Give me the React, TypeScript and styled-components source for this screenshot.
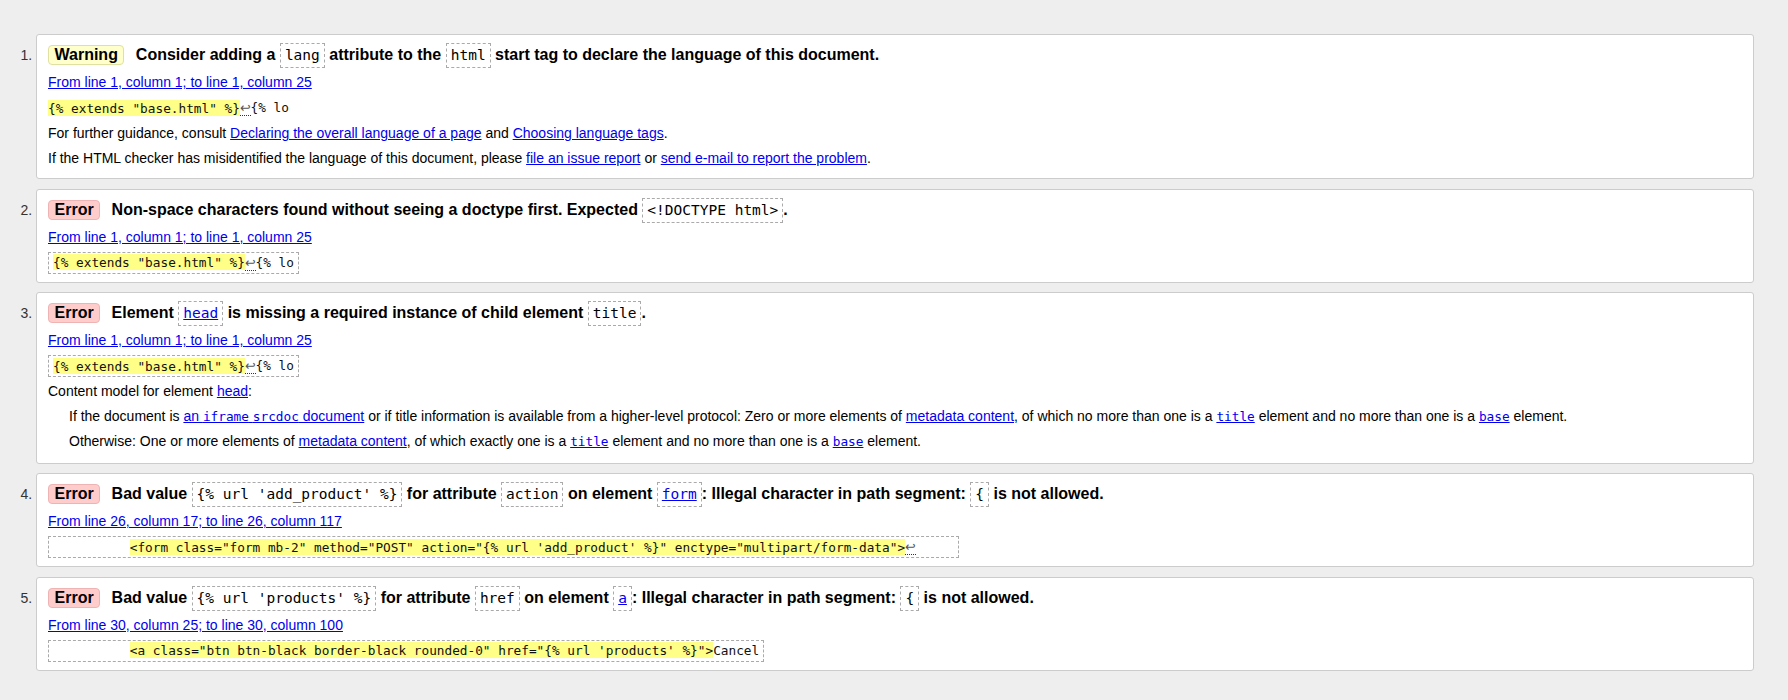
import React from 'react';
import styled, { createGlobalStyle } from 'styled-components';

const GlobalStyle = createGlobalStyle`
  html, body {
    margin: 0;
    padding: 0;
    background: #eee;
  }
  body {
    font-family: "Liberation Sans", Arial, sans-serif;
    font-size: 14px;
    color: #000;
  }
`;

const MessageList = styled.ol`
  margin: 0;
  padding: 34px 34px 24px 36px;
  list-style: decimal outside;
`;

const Message = styled.li`
  margin: 0 0 9.5px;
  padding: 8px 8px 8px 11px;
  background: #fff;
  border: 1px solid #ccc;
  border-radius: 3px;

  &::marker {
    color: #333;
    font-size: 14px;
  }
`;

const Title = styled.p`
  margin: 0;
  font-size: 16px;
  font-weight: bold;
  line-height: 24px;
`;

const Badge = styled.strong<{ $kind: 'warning' | 'error' }>`
  display: inline-block;
  margin-right: 7px;
  padding: 0 5.5px;
  line-height: 18px;
  border: 1px solid ${({ $kind }) => ($kind === 'error' ? '#eeb4b4' : '#e0e0a0')};
  border-radius: 4px;
  background: ${({ $kind }) => ($kind === 'error' ? '#fcc' : '#ffc')};
`;

const TitleCode = styled.code`
  display: inline-block;
  padding: 3px 4px;
  font-family: "DejaVu Sans Mono", "Liberation Mono", monospace;
  font-size: 14.5px;
  font-weight: normal;
  line-height: 17px;
  border: 1px dashed #aaa;
`;

const Link = styled.a`
  color: #00e;
  text-decoration: underline;
  cursor: pointer;
`;

const Location = styled.p`
  margin: 2px 0 0;
  line-height: 24px;
`;

const Extract = styled.p<{ $boxed?: boolean }>`
  width: fit-content;
  margin: 3px 0 0;
  padding: ${({ $boxed }) => ($boxed ? '2px 4px' : '3px 0')};
  font-family: "DejaVu Sans Mono", "Liberation Mono", monospace;
  font-size: 12.75px;
  line-height: 16px;
  white-space: pre;
  color: #111;
  border: ${({ $boxed }) => ($boxed ? '1px dashed #aaa' : '0')};
`;

const Mark = styled.mark`
  padding: 0.5px 0;
  color: #111;
  background: #ff8;
`;

const LineBreak = styled.b`
  font-family: "DejaVu Sans", sans-serif;
  font-weight: normal;
  color: #555;
  border-bottom: 1px dotted #333;
`;

const Note = styled.p`
  margin: 2px 0 0;
  line-height: 24.5px;

  & + & {
    margin-top: 0;
  }
`;

const Indented = styled.p`
  margin: 0;
  padding-left: 21px;
  line-height: 24.5px;
`;

const InlineCode = styled.code`
  font-family: "DejaVu Sans Mono", "Liberation Mono", monospace;
  font-size: 12.75px;
`;

const lf = <LineBreak title="Line break">↩</LineBreak>;

const App: React.FC = () => {
  return (
    <>
      <GlobalStyle />
      <MessageList>
        <Message>
          <Title>
            <Badge $kind="warning">Warning</Badge> Consider adding a <TitleCode>lang</TitleCode> attribute to
            the <TitleCode>html</TitleCode> start tag to declare the language of this document.
          </Title>
          <Location>
            <Link>From line 1, column 1; to line 1, column 25</Link>
          </Location>
          <Extract>
            <Mark>{'{% extends "base.html" %}'}</Mark>
            {lf}
            {'{% lo'}
          </Extract>
          <Note>
            For further guidance, consult <Link>Declaring the overall language of a page</Link> and{' '}
            <Link>Choosing language tags</Link>.
          </Note>
          <Note>
            If the HTML checker has misidentified the language of this document, please{' '}
            <Link>file an issue report</Link> or <Link>send e-mail to report the problem</Link>.
          </Note>
        </Message>

        <Message>
          <Title>
            <Badge $kind="error">Error</Badge> Non-space characters found without seeing a doctype first.
            Expected <TitleCode>{'<!DOCTYPE html>'}</TitleCode>.
          </Title>
          <Location>
            <Link>From line 1, column 1; to line 1, column 25</Link>
          </Location>
          <Extract $boxed>
            <Mark>{'{% extends "base.html" %}'}</Mark>
            {lf}
            {'{% lo'}
          </Extract>
        </Message>

        <Message>
          <Title>
            <Badge $kind="error">Error</Badge> Element{' '}
            <TitleCode>
              <Link>head</Link>
            </TitleCode>{' '}
            is missing a required instance of child element <TitleCode>title</TitleCode>.
          </Title>
          <Location>
            <Link>From line 1, column 1; to line 1, column 25</Link>
          </Location>
          <Extract $boxed>
            <Mark>{'{% extends "base.html" %}'}</Mark>
            {lf}
            {'{% lo'}
          </Extract>
          <Note>
            Content model for element <Link>head</Link>:
          </Note>
          <Indented>
            If the document is{' '}
            <Link>
              an <InlineCode>iframe</InlineCode> <InlineCode>srcdoc</InlineCode> document
            </Link>{' '}
            or if title information is available from a higher-level protocol: Zero or more elements
            of <Link>metadata content</Link>, of which no more than one is a{' '}
            <Link>
              <InlineCode>title</InlineCode>
            </Link>{' '}
            element and no more than one is a{' '}
            <Link>
              <InlineCode>base</InlineCode>
            </Link>{' '}
            element.
          </Indented>
          <Indented>
            Otherwise: One or more elements of <Link>metadata content</Link>, of which exactly one is
            a{' '}
            <Link>
              <InlineCode>title</InlineCode>
            </Link>{' '}
            element and no more than one is a{' '}
            <Link>
              <InlineCode>base</InlineCode>
            </Link>{' '}
            element.
          </Indented>
        </Message>

        <Message>
          <Title>
            <Badge $kind="error">Error</Badge> Bad value <TitleCode>{"{% url 'add_product' %}"}</TitleCode> for
            attribute <TitleCode>action</TitleCode> on element{' '}
            <TitleCode>
              <Link>form</Link>
            </TitleCode>
            : Illegal character in path segment: <TitleCode>{'{'}</TitleCode> is not allowed.
          </Title>
          <Location>
            <Link>From line 26, column 17; to line 26, column 117</Link>
          </Location>
          <Extract $boxed>
            {'          '}
            <Mark>
              {`<form class="form mb-2" method="POST" action="{% url 'add_product' %}" enctype="multipart/form-data">`}
            </Mark>
            {lf}
            {'     '}
          </Extract>
        </Message>

        <Message>
          <Title>
            <Badge $kind="error">Error</Badge> Bad value <TitleCode>{"{% url 'products' %}"}</TitleCode> for
            attribute <TitleCode>href</TitleCode> on element{' '}
            <TitleCode>
              <Link>a</Link>
            </TitleCode>
            : Illegal character in path segment: <TitleCode>{'{'}</TitleCode> is not allowed.
          </Title>
          <Location>
            <Link>From line 30, column 25; to line 30, column 100</Link>
          </Location>
          <Extract $boxed>
            {'          '}
            <Mark>{`<a class="btn btn-black border-black rounded-0" href="{% url 'products' %}">`}</Mark>
            {'Cancel'}
          </Extract>
        </Message>
      </MessageList>
    </>
  );
};

export default App;
